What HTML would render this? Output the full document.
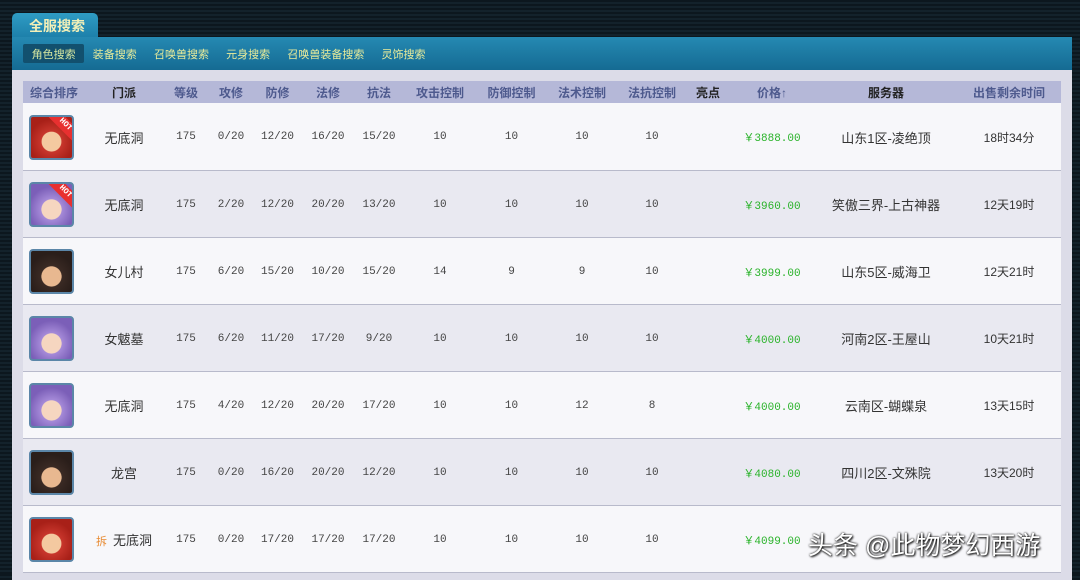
<!DOCTYPE html>
<html><head><meta charset="utf-8"><style>
*{margin:0;padding:0;box-sizing:border-box}
body{width:1080px;height:574px;overflow:hidden;background:#0e1b23;background-image:repeating-linear-gradient(0deg,#0c171e 0 2px,#13222b 2px 4px);font-family:"Liberation Sans","Noto Sans CJK SC",sans-serif;position:relative}
.tab{position:absolute;left:12px;top:13px;width:86px;height:26px;background:linear-gradient(#2f9cc4,#1c7ea8);border-radius:5px 5px 0 0;color:#f3f0b8;font-weight:bold;font-size:14px;padding:3px 0 0 17px}
.bar{position:absolute;left:12px;top:37px;width:1060px;height:33px;background:linear-gradient(#2589b2,#156b93);}
.nav{position:absolute;left:23px;top:44px;font-size:11px;color:#e8eb9a;display:flex}
.nav span{padding:2px 8.6px;height:19px}
.nav span.a{background:#12506e;border-radius:2px;color:#d8e8a0}
.panel{position:absolute;left:12px;top:70px;width:1060px;height:510px;background:#dcdce8}
table{position:absolute;left:23px;top:81px;width:1038px;border-collapse:collapse;table-layout:fixed;font-size:12px;color:#333}
th{height:22px;background:#b5b8d8;color:#4e5a8e;font-size:12px;font-weight:bold;text-align:center}
th.k{color:#222}
td{height:67px;text-align:center;border-bottom:1px solid #b8bacb;font-family:"Liberation Mono","Noto Sans CJK SC",monospace;font-size:11px;color:#444;padding-top:2px}
td.c{font-family:"Liberation Sans","Noto Sans CJK SC",sans-serif;font-size:13px;color:#333}
td.t{font-size:12px}
tr:nth-child(even) td{background:#f7f7fa}
tr:nth-child(odd) td{background:#e9e9f1}
td.p{color:#2ab32a}
.av{width:45px;height:45px;border:2px solid #5b86a8;border-radius:4px;margin-left:6px;position:relative;overflow:hidden}
.r{background:radial-gradient(circle at 50% 60%,#f4c9a0 0 30%,#c8362c 32%,#a82018 70%)}
.pu{background:radial-gradient(circle at 50% 62%,#f6d6c0 0 30%,#a58ad8 32%,#7b5fb8 70%)}
.d{background:radial-gradient(circle at 50% 62%,#e8b890 0 30%,#3a2a24 32%,#2a1e1a 70%)}
.hot{position:absolute;right:-10px;top:2px;width:34px;height:12px;background:#e83030;transform:rotate(45deg);color:#fff;font-size:8px;font-weight:bold;text-align:center;line-height:12px}
.wm{position:absolute;left:808px;top:526px;font-size:25px;color:#fff;text-shadow:0 0 2px #000,1px 1px 2px #000;font-family:"Liberation Sans","Noto Sans CJK SC",sans-serif}
</style></head><body>
<div class="tab">全服搜索</div>
<div class="bar"></div>
<div class="nav"><span class="a">角色搜索</span><span>装备搜索</span><span>召唤兽搜索</span><span>元身搜索</span><span>召唤兽装备搜索</span><span>灵饰搜索</span></div>
<div class="panel"></div>
<table>
<colgroup><col style="width:62px"><col style="width:78px"><col style="width:46px"><col style="width:44px"><col style="width:49px"><col style="width:52px"><col style="width:50px"><col style="width:72px"><col style="width:71px"><col style="width:70px"><col style="width:70px"><col style="width:42px"><col style="width:86px"><col style="width:142px"><col style="width:104px"></colgroup>
<tr><th>综合排序</th><th class="k">门派</th><th>等级</th><th>攻修</th><th>防修</th><th>法修</th><th>抗法</th><th>攻击控制</th><th>防御控制</th><th>法术控制</th><th>法抗控制</th><th class="k">亮点</th><th>价格↑</th><th class="k">服务器</th><th>出售剩余时间</th></tr>
<tr><td><div class="av r"><div class="hot">HOT</div></div></td><td class="c">无底洞</td><td>175</td><td>0/20</td><td>12/20</td><td>16/20</td><td>15/20</td><td>10</td><td>10</td><td>10</td><td>10</td><td></td><td class="p">￥3888.00</td><td class="c">山东1区-凌绝顶</td><td class="c t">18时34分</td></tr>
<tr><td><div class="av pu"><div class="hot">HOT</div></div></td><td class="c">无底洞</td><td>175</td><td>2/20</td><td>12/20</td><td>20/20</td><td>13/20</td><td>10</td><td>10</td><td>10</td><td>10</td><td></td><td class="p">￥3960.00</td><td class="c">笑傲三界-上古神器</td><td class="c t">12天19时</td></tr>
<tr><td><div class="av d"></div></td><td class="c">女儿村</td><td>175</td><td>6/20</td><td>15/20</td><td>10/20</td><td>15/20</td><td>14</td><td>9</td><td>9</td><td>10</td><td></td><td class="p">￥3999.00</td><td class="c">山东5区-威海卫</td><td class="c t">12天21时</td></tr>
<tr><td><div class="av pu"></div></td><td class="c">女魃墓</td><td>175</td><td>6/20</td><td>11/20</td><td>17/20</td><td>9/20</td><td>10</td><td>10</td><td>10</td><td>10</td><td></td><td class="p">￥4000.00</td><td class="c">河南2区-王屋山</td><td class="c t">10天21时</td></tr>
<tr><td><div class="av pu"></div></td><td class="c">无底洞</td><td>175</td><td>4/20</td><td>12/20</td><td>20/20</td><td>17/20</td><td>10</td><td>10</td><td>12</td><td>8</td><td></td><td class="p">￥4000.00</td><td class="c">云南区-蝴蝶泉</td><td class="c t">13天15时</td></tr>
<tr><td><div class="av d"></div></td><td class="c">龙宫</td><td>175</td><td>0/20</td><td>16/20</td><td>20/20</td><td>12/20</td><td>10</td><td>10</td><td>10</td><td>10</td><td></td><td class="p">￥4080.00</td><td class="c">四川2区-文殊院</td><td class="c t">13天20时</td></tr>
<tr><td><div class="av r"></div></td><td class="c"><span style="color:#e88a30;font-size:11px;margin-right:6px">拆</span>无底洞</td><td>175</td><td>0/20</td><td>17/20</td><td>17/20</td><td>17/20</td><td>10</td><td>10</td><td>10</td><td>10</td><td></td><td class="p">￥4099.00</td><td class="c"></td><td class="c"></td></tr>
</table>
<div class="wm">头条 @此物梦幻西游</div>
</body></html>
